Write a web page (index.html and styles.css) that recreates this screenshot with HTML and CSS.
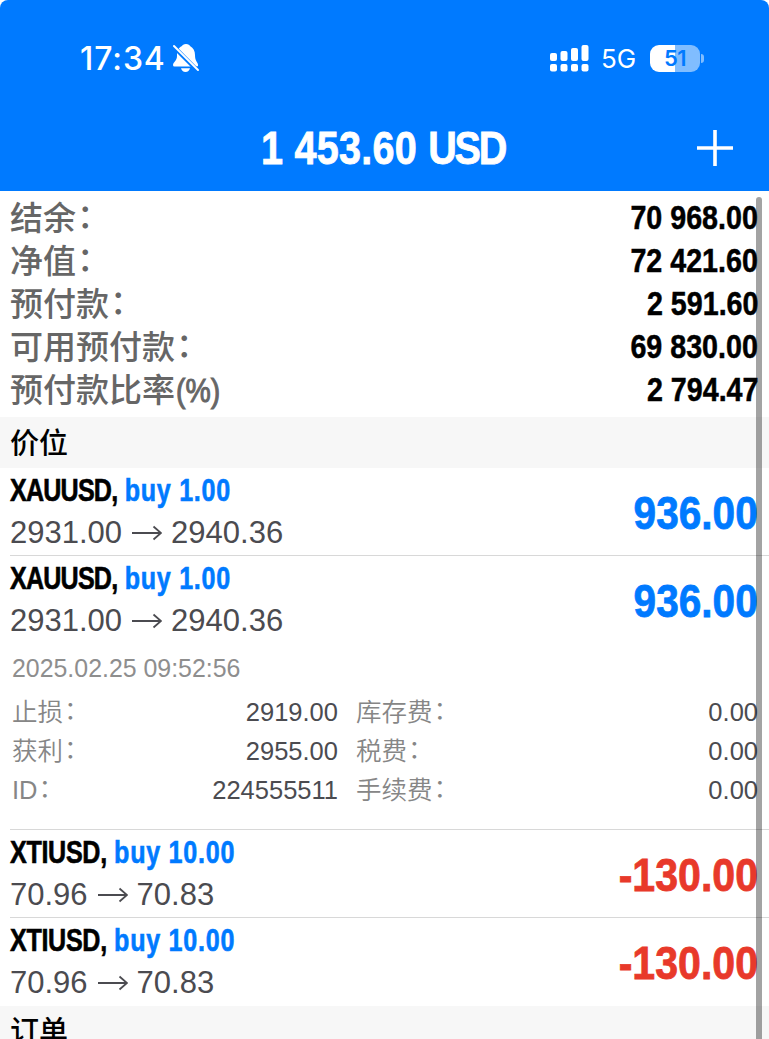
FILE: index.html
```
<!DOCTYPE html>
<html lang="zh-CN">
<head>
    <meta charset="UTF-8">
    <meta name="viewport" content="width=device-width, initial-scale=1.0">
    <title>1 453.60 USD</title>
    <link rel="stylesheet" href="styles.css">
</head>
<body>

<header class="header">
    <div class="status">
        <span class="time">17:34</span>
        <svg class="bell" width="28" height="30" viewBox="0 0 28 30">
            <path fill="#fff" d="M14 1C11.500 1 10.500 2 10 3C6 5 5 8 5 13C5 18 1 19 1 22Q1 23.500 2.500 23.500H25Q26.500 23.500 26 21.500C25.500 19 23 18 23 12C23 8 21.500 5 18 3C17.500 2 16.500 1 14 1Z"/>
            <path fill="#fff" d="M9 25.300H18Q17 29 13.500 29Q10 29 9 25.300Z"/>
            <path stroke="#007aff" stroke-width="4.400" d="M0 2L28 30"/>
            <path stroke="#fff" stroke-width="2" stroke-linecap="round" d="M2 3L26 27"/>
        </svg>
        <div class="status-right">
            <svg width="39" height="28" viewBox="0 0 39 28" fill="#fff">
                <rect x="0" y="9" width="7" height="8" rx="2"/>
                <rect x="10.500" y="7" width="7" height="10" rx="2"/>
                <rect x="21" y="4" width="7" height="13" rx="2"/>
                <rect x="31.500" y="1" width="7" height="16" rx="2"/>
                <rect x="0" y="20" width="7" height="7.500" rx="2"/>
                <rect x="10.500" y="20" width="7" height="7.500" rx="2"/>
                <rect x="21" y="20" width="7" height="7.500" rx="2"/>
                <rect x="31.500" y="20" width="7" height="7.500" rx="2"/>
            </svg>
            <span class="network">5G</span>
            <span class="battery">51</span>
            <span class="battery-tip"></span>
        </div>
    </div>
    <div class="title-bar">
        <h1 class="title">1 453.60 <span class="currency">USD</span></h1>
        <svg class="plus" width="36" height="36" viewBox="0 0 36 36">
            <path stroke="#fff" stroke-width="3.600" d="M18 0V36M0 18H36"/>
        </svg>
    </div>
</header>

<main>
    <div class="summary">
        <div class="summary-row"><span class="label">结余<u>：</u></span><b>70 968.00</b></div>
        <div class="summary-row"><span class="label">净值<u>：</u></span><b>72 421.60</b></div>
        <div class="summary-row"><span class="label">预付款<u>：</u></span><b>2 591.60</b></div>
        <div class="summary-row"><span class="label">可用预付款<u>：</u></span><b>69 830.00</b></div>
        <div class="summary-row"><span class="label">预付款比率<em>(%)</em></span><b>2 794.47</b></div>
    </div>

    <h2 class="section">价位</h2>

    <div class="position">
        <div class="deal">
            <div class="symbol"><span class="name">XAUUSD,</span><span class="side">buy 1.00</span></div>
            <div class="prices">2931.00<svg class="arrow" viewBox="0 0 30 16"><path d="M0 8H29M21.500 1.500L29 8L21.500 14.500"/></svg>2940.36</div>
        </div>
        <div class="profit">936.00</div>
    </div>

    <div class="position open">
        <div class="deal">
            <div class="symbol"><span class="name">XAUUSD,</span><span class="side">buy 1.00</span></div>
            <div class="prices">2931.00<svg class="arrow" viewBox="0 0 30 16"><path d="M0 8H29M21.500 1.500L29 8L21.500 14.500"/></svg>2940.36</div>
        </div>
        <div class="profit">936.00</div>
        <div class="details">
            <div class="date">2025.02.25 09:52:56</div>
            <div class="detail"><span>止损<u>：</u></span><i>2919.00</i></div>
            <div class="detail"><span>库存费<u>：</u></span><i>0.00</i></div>
            <div class="detail"><span>获利<u>：</u></span><i>2955.00</i></div>
            <div class="detail"><span>税费<u>：</u></span><i>0.00</i></div>
            <div class="detail"><span>ID<u>：</u></span><i>224555511</i></div>
            <div class="detail"><span>手续费<u>：</u></span><i>0.00</i></div>
        </div>
    </div>

    <div class="position">
        <div class="deal">
            <div class="symbol xti"><span class="name">XTIUSD,</span><span class="side">buy 10.00</span></div>
            <div class="prices">70.96<svg class="arrow" viewBox="0 0 30 16"><path d="M0 8H29M21.500 1.500L29 8L21.500 14.500"/></svg>70.83</div>
        </div>
        <div class="profit loss">-130.00</div>
    </div>

    <div class="position last">
        <div class="deal">
            <div class="symbol xti"><span class="name">XTIUSD,</span><span class="side">buy 10.00</span></div>
            <div class="prices">70.96<svg class="arrow" viewBox="0 0 30 16"><path d="M0 8H29M21.500 1.500L29 8L21.500 14.500"/></svg>70.83</div>
        </div>
        <div class="profit loss">-130.00</div>
    </div>

    <h2 class="section">订单</h2>
</main>

<div class="scrollbar"></div>

</body>
</html>
```
FILE: styles.css
```
* {
    box-sizing: border-box;
}
body {
    position: relative;
    margin: 0;
    height: 1039px;
    overflow: hidden;
    background: #fff;
    font-family: "Liberation Sans", "Noto Sans CJK SC", sans-serif;
}
h1, h2 {
    margin: 0;
}
/* full-width colon, centred on the label height */
u {
    display: inline-block;
    text-decoration: none;
    transform: translate(1px, -2px);
}
.header {
    height: 191px;
    background: #007aff;
    color: #fff;
    border-radius: 8px 8px 0 0;
    padding-top: 36px;
}
.status {
    display: flex;
    align-items: center;
    height: 44px;
    padding: 0 65px 0 80px;
    font-family: Inter, sans-serif;
}
.time {
    width: 92px;
    font-size: 32px;
    font-weight: 500;
    letter-spacing: 0.9px;
}
.status-right {
    display: flex;
    align-items: center;
    margin-left: auto;
}
.network {
    width: 36px;
    margin: 0 13px 0 12px;
    font-size: 26px;
}
.battery {
    width: 50px;
    height: 27px;
    border-radius: 9px;
    background: linear-gradient(90deg, #fff 51%, #80bdff 51%);
    color: #007aff;
    font-size: 22px;
    font-weight: 600;
    letter-spacing: -0.5px;
    line-height: 27px;
    text-align: center;
}
.battery-tip {
    width: 3px;
    height: 9px;
    margin-left: 1px;
    border-radius: 0 4px 4px 0;
    background: #80bdff;
}
.title-bar {
    display: grid;
    grid-template-columns: 1fr auto 1fr;
    align-items: center;
    height: 88px;
    margin-top: 24px;
    padding: 0 36px;
}
.title {
    grid-column: 2;
    font-size: 46px;
    line-height: 60px;
    white-space: nowrap;
    letter-spacing: 0.3px;
    transform: translateX(-1px) scaleX(0.86);
    -webkit-text-stroke: 0.8px;
}
.currency {
    letter-spacing: -2.5px;
}
.plus {
    justify-self: end;
}
.summary {
    height: 226px;
    padding: 5px 11px 0 10px;
}
.summary-row {
    display: flex;
    justify-content: space-between;
    height: 43px;
    line-height: 43px;
    font-size: 33px;
}
.label {
    height: 40px;
    line-height: 40px;
    color: #666;
    font-family: "Noto Sans CJK SC", sans-serif;
    font-weight: 500;
}
.label em {
    display: inline-block;
    margin-left: 1px;
    font-family: "Liberation Sans", sans-serif;
    font-style: normal;
    transform: scaleX(0.86);
    transform-origin: left;
    -webkit-text-stroke: 1px;
}
.summary-row b {
    transform: scaleX(0.868);
    transform-origin: right;
    -webkit-text-stroke: 0.5px;
}
.section {
    height: 51px;
    padding-left: 10px;
    background: #f7f7f7;
    font-family: "Noto Sans CJK SC", sans-serif;
    font-size: 29px;
    font-weight: 500;
    line-height: 49px;
}
.position {
    display: flex;
    flex-wrap: wrap;
    justify-content: space-between;
    align-content: flex-start;
    height: 88px;
    margin-left: 10px;
    padding-right: 11px;
    border-bottom: 1px solid #d8d8d8;
}
.position.open {
    height: 274px;
}
.position.last {
    border-bottom: none;
}
.position.last + .section {
    line-height: 46px;
}
.symbol {
    height: 43px;
    font-size: 31px;
    font-weight: bold;
    line-height: 46px;
    white-space: nowrap;
    transform: scaleX(0.81);
    transform-origin: left;
    -webkit-text-stroke: 0.6px;
}
.name {
    margin-right: 9px;
    letter-spacing: -1px;
}
.xti .name {
    letter-spacing: -0.4px;
}
.side {
    color: #007aff;
    letter-spacing: 0.9px;
}
.prices {
    display: flex;
    align-items: center;
    height: 43px;
    color: #4b4b50;
    font-size: 31px;
    line-height: 43px;
}
.arrow {
    width: 30px;
    height: 16px;
    margin: 0 9px 0 10px;
    fill: none;
    stroke: #4b4b50;
    stroke-width: 1.8;
}
.profit {
    color: #007aff;
    font-size: 46px;
    font-weight: bold;
    line-height: 90px;
    height: 86px;
    transform: scaleX(0.882);
    transform-origin: right;
    -webkit-text-stroke: 0.8px;
}
.profit.loss {
    color: #e8392a;
    transform: scaleX(0.893);
}
.details {
    display: grid;
    grid-template-columns: 326px 1fr;
    column-gap: 18px;
    width: 100%;
    padding: 1px 0 0 2px;
    color: #8e8e8e;
    font-size: 25.5px;
}
.date {
    grid-column: 1 / 3;
    height: 49px;
    font-size: 24.9px;
    line-height: 50px;
}
.detail {
    display: flex;
    justify-content: space-between;
    height: 39px;
    line-height: 41px;
}
.detail span {
    color: #868686;
    font-weight: 350;
}
.detail i {
    color: #4b4b50;
    font-style: normal;
}
.scrollbar {
    position: absolute;
    top: 197px;
    right: 7px;
    bottom: 0;
    width: 6px;
    border-radius: 3px 3px 0 0;
    background: rgba(0, 0, 0, 0.36);
}
```
